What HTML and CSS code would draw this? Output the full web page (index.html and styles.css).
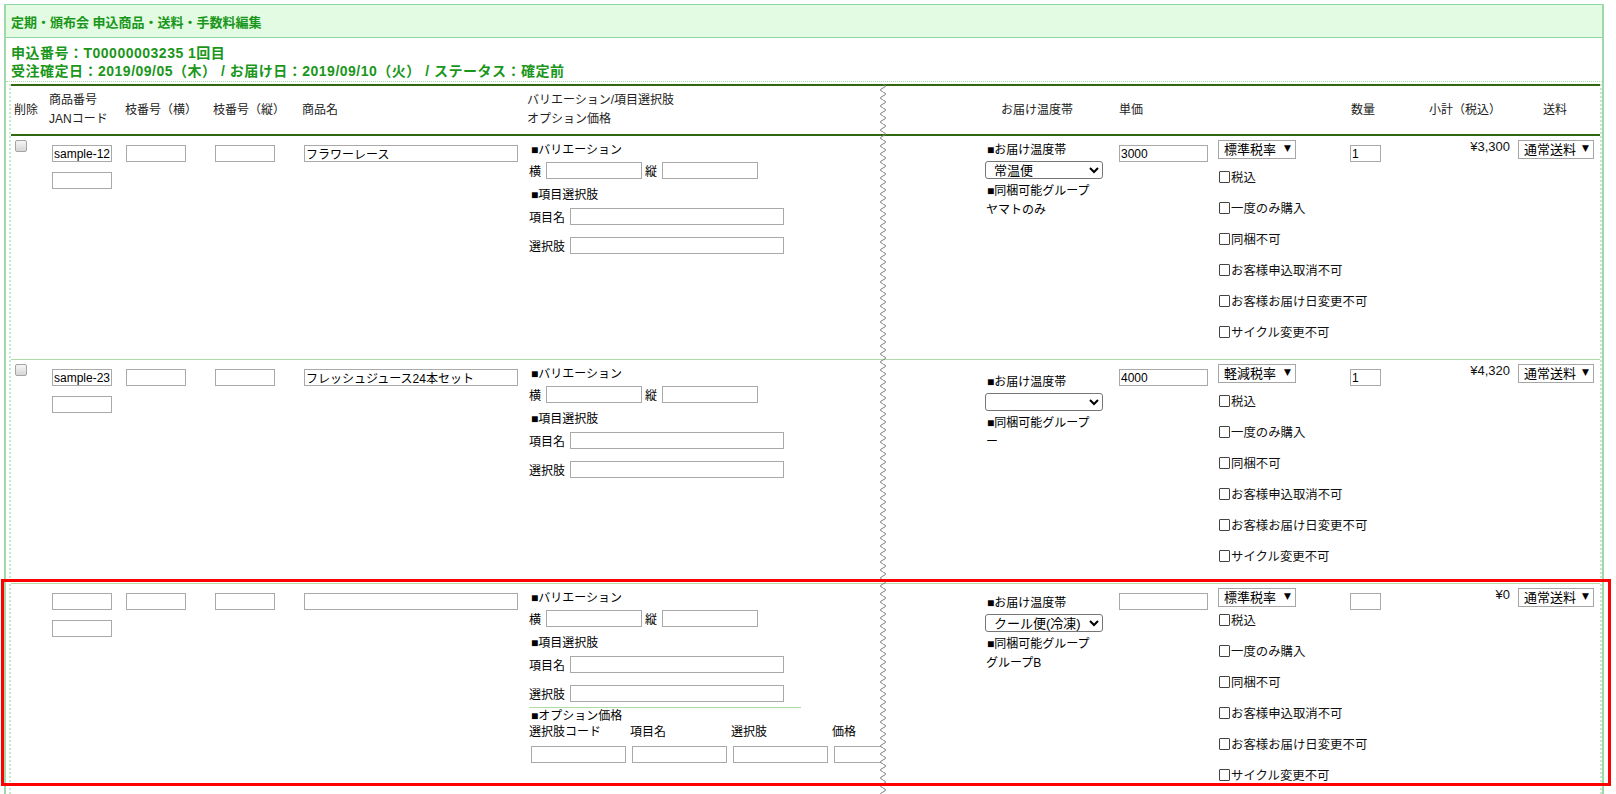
FILE: index.html
```html
<!DOCTYPE html>
<html lang="ja">
<head>
<meta charset="utf-8">
<title>定期・頒布会 申込商品・送料・手数料編集</title>
<link rel="stylesheet" href="styles.css">
</head>
<body>
<div class="wrap">
  <div class="title">定期・頒布会 申込商品・送料・手数料編集</div>
  <div class="info">
    <div>申込番号：T00000003235 1回目</div>
    <div>受注確定日：2019/09/05（木） / お届け日：2019/09/10（火） / ステータス：確定前</div>
  </div>
  <div class="tbl">
    <div class="grid thead">
      <div class="h h-del">削除</div>
      <div class="h h-code">商品番号<br>JANコード</div>
      <div class="h h-eda">枝番号（横）</div>
      <div class="h h-eda">枝番号（縦）</div>
      <div class="h h-name">商品名</div>
      <div class="h h-var">バリエーション/項目選択肢<br>オプション価格</div>
      <div class="h"></div>
      <div class="h h-temp">お届け温度帯</div>
      <div class="h h-price">単価</div>
      <div class="h"></div>
      <div class="h h-qty">数量</div>
      <div class="h h-sub">小計（税込）</div>
      <div class="h h-ship">送料</div>
    </div>

    <!-- row 1 -->
    <div class="grid row">
      <div class="c c-del"><input type="checkbox" class="delchk"></div>
      <div class="c c-code"><input class="ti w60" value="sample-123"><input class="ti w60 jan"></div>
      <div class="c c-eda1"><input class="ti w60"></div>
      <div class="c c-eda2"><input class="ti w60"></div>
      <div class="c c-name"><input class="ti w214" value="フラワーレース"></div>
      <div class="c c-var">
        <div class="vl vh">■バリエーション</div>
        <div class="vl vxy"><span>横</span><input class="ti w96"><span class="lt">縦</span><input class="ti w96"></div>
        <div class="vl vh2">■項目選択肢</div>
        <div class="vl vi"><span>項目名</span><input class="ti w214"></div>
        <div class="vl vi vi2"><span>選択肢</span><input class="ti w214"></div>
      </div>
      <div class="c c-gap"></div>
      <div class="c c-temp">
        <div class="tl">■お届け温度帯</div>
        <select class="tsel"><option>常温便</option></select>
        <div class="tl tl2">■同梱可能グループ</div>
        <div class="tv">ヤマトのみ</div>
      </div>
      <div class="c c-price"><input class="ti w89" value="3000"></div>
      <div class="c c-tax">
        <span class="ws"><select class="wsel w78"><option>標準税率</option></select></span>
        <div class="chks">
          <label class="ck"><input type="checkbox">税込</label>
          <label class="ck"><input type="checkbox">一度のみ購入</label>
          <label class="ck"><input type="checkbox">同梱不可</label>
          <label class="ck"><input type="checkbox">お客様申込取消不可</label>
          <label class="ck"><input type="checkbox">お客様お届け日変更不可</label>
          <label class="ck"><input type="checkbox">サイクル変更不可</label>
        </div>
      </div>
      <div class="c c-qty"><input class="ti w31" value="1"></div>
      <div class="c c-sub">¥3,300</div>
      <div class="c c-ship"><span class="ws"><select class="wsel w76"><option>通常送料</option></select></span></div>
    </div>

    <!-- row 2 -->
    <div class="grid row">
      <div class="c c-del"><input type="checkbox" class="delchk"></div>
      <div class="c c-code"><input class="ti w60" value="sample-234"><input class="ti w60 jan"></div>
      <div class="c c-eda1"><input class="ti w60"></div>
      <div class="c c-eda2"><input class="ti w60"></div>
      <div class="c c-name"><input class="ti w214" value="フレッシュジュース24本セット"></div>
      <div class="c c-var">
        <div class="vl vh">■バリエーション</div>
        <div class="vl vxy"><span>横</span><input class="ti w96"><span class="lt">縦</span><input class="ti w96"></div>
        <div class="vl vh2">■項目選択肢</div>
        <div class="vl vi"><span>項目名</span><input class="ti w214"></div>
        <div class="vl vi vi2"><span>選択肢</span><input class="ti w214"></div>
      </div>
      <div class="c c-gap"></div>
      <div class="c c-temp temp-low">
        <div class="tl">■お届け温度帯</div>
        <select class="tsel"><option></option></select>
        <div class="tl tl2">■同梱可能グループ</div>
        <div class="tv">ー</div>
      </div>
      <div class="c c-price"><input class="ti w89" value="4000"></div>
      <div class="c c-tax">
        <span class="ws"><select class="wsel w78"><option>軽減税率</option></select></span>
        <div class="chks">
          <label class="ck"><input type="checkbox">税込</label>
          <label class="ck"><input type="checkbox">一度のみ購入</label>
          <label class="ck"><input type="checkbox">同梱不可</label>
          <label class="ck"><input type="checkbox">お客様申込取消不可</label>
          <label class="ck"><input type="checkbox">お客様お届け日変更不可</label>
          <label class="ck"><input type="checkbox">サイクル変更不可</label>
        </div>
      </div>
      <div class="c c-qty"><input class="ti w31" value="1"></div>
      <div class="c c-sub">¥4,320</div>
      <div class="c c-ship"><span class="ws"><select class="wsel w76"><option>通常送料</option></select></span></div>
    </div>

    <!-- row 3 (new) -->
    <div class="grid row row-new">
      <div class="c c-del"></div>
      <div class="c c-code"><input class="ti w60"><input class="ti w60 jan"></div>
      <div class="c c-eda1"><input class="ti w60"></div>
      <div class="c c-eda2"><input class="ti w60"></div>
      <div class="c c-name"><input class="ti w214"></div>
      <div class="c c-var">
        <div class="vl vh">■バリエーション</div>
        <div class="vl vxy"><span>横</span><input class="ti w96"><span class="lt">縦</span><input class="ti w96"></div>
        <div class="vl vh2">■項目選択肢</div>
        <div class="vl vi"><span>項目名</span><input class="ti w214"></div>
        <div class="vl vi vi2"><span>選択肢</span><input class="ti w214"></div>
        <div class="opt">
          <div class="opt-h">■オプション価格</div>
          <div class="opt-grid">
            <span>選択肢コード</span><span>項目名</span><span>選択肢</span><span>価格</span>
            <input class="ti w95"><input class="ti w95"><input class="ti w95"><input class="ti w95">
          </div>
        </div>
      </div>
      <div class="c c-gap"></div>
      <div class="c c-temp temp-mid">
        <div class="tl">■お届け温度帯</div>
        <select class="tsel"><option>クール便(冷凍)</option></select>
        <div class="tl tl2">■同梱可能グループ</div>
        <div class="tv">グループB</div>
      </div>
      <div class="c c-price"><input class="ti w89"></div>
      <div class="c c-tax">
        <span class="ws"><select class="wsel w78"><option>標準税率</option></select></span>
        <div class="chks chks-up">
          <label class="ck"><input type="checkbox">税込</label>
          <label class="ck"><input type="checkbox">一度のみ購入</label>
          <label class="ck"><input type="checkbox">同梱不可</label>
          <label class="ck"><input type="checkbox">お客様申込取消不可</label>
          <label class="ck"><input type="checkbox">お客様お届け日変更不可</label>
          <label class="ck"><input type="checkbox">サイクル変更不可</label>
        </div>
      </div>
      <div class="c c-qty"><input class="ti w31"></div>
      <div class="c c-sub">¥0</div>
      <div class="c c-ship"><span class="ws"><select class="wsel w76"><option>通常送料</option></select></span></div>
    </div>
  </div>
</div>

<svg class="zig" width="10" height="712" aria-hidden="true">
  <defs>
    <pattern id="zz" width="10" height="8" patternUnits="userSpaceOnUse">
      <path d="M5 0 Q10 2 5 4 Q0 6 5 8" fill="none" stroke="#7d7d7d" stroke-width="1"/>
    </pattern>
  </defs>
  <rect width="10" height="712" fill="url(#zz)"/>
</svg>
<div class="redbox"></div>
</body>
</html>
```

FILE: styles.css
```css
html, body {
  margin: 0;
  padding: 0;
  height: 794px;
  overflow: hidden;
  background: #fff;
}
body {
  position: relative;
  padding-top: 4px;
  box-sizing: border-box;
  font-family: "Liberation Sans", "Noto Sans CJK JP", sans-serif;
  font-size: 12px;
  color: #000;
}

.wrap {
  margin-left: 4px;
  width: 1600px;
  height: 790px;
  box-sizing: border-box;
  border-left: 2px solid #9fd9ab;
  border-right: 2px solid #9fd9ab;
}

.title {
  height: 32px;
  border-top: 1px solid #8fd4a4;
  border-bottom: 1px solid #8fd4a4;
  background: #e2fbe2;
  color: #1a961a;
  font-weight: bold;
  font-size: 13px;
  display: flex;
  align-items: center;
  padding-left: 5px;
}

.info {
  padding: 6px 0 1px 5px;
  border-bottom: 1px dotted #a8dcb0;
  color: #1a961a;
  font-weight: bold;
  font-size: 14px;
  letter-spacing: 0.5px;
  line-height: 18px;
}

.tbl {
  margin: 2px 0 0 3px;
  width: 1593px;
  box-sizing: border-box;
  border-left: 2px dotted #c8e9c8;
  border-right: 2px dotted #c8e9c8;
}

.grid {
  display: grid;
  grid-template-columns: 36px 74px 88px 89px 227px 356px 102px 132px 99px 132px 42px 126px 86px;
}

.thead {
  height: 48px;
  border-top: 2px solid #306a10;
  border-bottom: 2px solid #306a10;
  align-items: center;
  color: #222;
  line-height: 19px;
}
.h-del { padding-left: 3px; }
.h-code { padding-left: 2px; }
.h-eda { padding-left: 4px; }
.h-name { padding-left: 4px; }
.h-var { padding-left: 2px; }
.h-temp { padding-left: 18px; }
.h-price { padding-left: 4px; }
.h-qty { padding-left: 5px; }
.h-sub { padding-left: 41px; }
.h-ship { padding-left: 29px; }

.row {
  border-bottom: 1px solid #aedba6;
  align-items: start;
}
.row-new { border-bottom: 0; }

.c { min-width: 0; }

/* inputs */
.ti {
  display: block;
  box-sizing: border-box;
  height: 17px;
  margin: 0;
  padding: 0 1px;
  border: 1px solid #a9a9a9;
  border-radius: 0;
  background: #fff;
  font: 12px "Liberation Sans", "Noto Sans CJK JP", sans-serif;
  color: #000;
  outline: none;
}
.w60 { width: 60px; }
.w96 { width: 96px; }
.w214 { width: 214px; }
.w89 { width: 89px; }
.w31 { width: 31px; }
.w95 { width: 95px; }

.c-del { padding: 4px 0 0 4px; }
.delchk {
  appearance: none;
  display: block;
  margin: 0;
  width: 12px;
  height: 12px;
  box-sizing: border-box;
  border: 1px solid #a4a4a4;
  border-radius: 2px;
  background: linear-gradient(#f6f6f6, #d6d6d6);
}

.c-code { padding: 9px 0 0 5px; }
.c-code .jan { margin-top: 10px; }
.c-eda1 { padding: 9px 0 0 5px; }
.c-eda2 { padding: 9px 0 0 6px; }
.c-name { padding: 9px 0 0 6px; }

/* variation */
.c-var {
  padding: 2px 0 0 4px;
  overflow: hidden;
}
.vl {
  display: flex;
  align-items: center;
  white-space: nowrap;
}
.vl .ti { display: inline-block; flex-shrink: 0; }
.vh { height: 20px; padding-left: 2px; }
.vxy { height: 24px; }
.vxy span { margin-right: 5px; }
.vxy .lt { margin-left: 3px; }
.vh2 { height: 22px; padding-left: 2px; }
.vi { height: 24px; }
.vi span { margin-right: 5px; }
.vi2 { margin-top: 5px; }

.opt {
  margin-top: 2px;
  width: 272px;
  border-top: 1px solid #aedba6;
}
.opt-h { height: 16px; line-height: 16px; padding-left: 2px; }
.opt-grid {
  display: grid;
  grid-template-columns: 101px 101px 101px 101px;
  width: 404px;
  line-height: 16px;
}
.opt-grid span { height: 16px; white-space: nowrap; }
.opt-grid .ti { margin: 6px 0 0 2px; }

/* temperature */
.c-temp { padding: 4px 0 0 3px; white-space: nowrap; }
.temp-low { padding-top: 12px; }
.temp-mid { padding-top: 9px; }
.tl { height: 20px; line-height: 20px; padding-left: 1px; }
.tl2 { margin-top: 2px; }
.tv { height: 18px; line-height: 18px; }
.tsel {
  display: block;
  width: 118px;
  height: 18px;
  margin: 1px 0 0 -1px;
  padding: 0 0 0 4px;
  font: 13px "Liberation Sans", "Noto Sans CJK JP", sans-serif;
  color: #000;
  border: 1px solid #767676;
  border-radius: 3px;
  background: #fff;
}

.c-price { padding: 9px 0 0 4px; }

/* tax */
.c-tax { padding: 4px 0 12px 4px; white-space: nowrap; }
.ws {
  position: relative;
  display: inline-block;
  vertical-align: top;
}
.ws::after {
  content: "▼";
  position: absolute;
  right: 5px;
  top: 3px;
  font-family: "DejaVu Sans", sans-serif;
  font-size: 9px;
  line-height: 10px;
  color: #000;
  pointer-events: none;
}
.wsel {
  appearance: none;
  display: block;
  box-sizing: border-box;
  height: 19px;
  margin: 0;
  padding: 0 0 0 5px;
  border: 1px solid #a6a6a6;
  border-radius: 0;
  background: #fff;
  font: 13px "Liberation Sans", "Noto Sans CJK JP", sans-serif;
  color: #000;
}
.w78 { width: 78px; }
.w76 { width: 76px; }

.chks { margin-top: 2px; }
.chks-up { margin-top: -3px; }
.ck {
  display: flex;
  align-items: center;
  height: 31px;
  font-size: 12.4px;
  white-space: nowrap;
  color: #111;
}
.ck input {
  appearance: none;
  flex-shrink: 0;
  margin: 0 1px 0 1px;
  width: 11px;
  height: 12px;
  box-sizing: border-box;
  border: 1px solid #444;
  border-radius: 1px;
  background: #fff;
}

.c-qty { padding: 9px 0 0 4px; }
.c-sub {
  padding: 3px 4px 0 0;
  text-align: right;
  font-size: 13px;
  line-height: 16px;
  color: #111;
}
.c-ship { padding: 4px 0 0 4px; }

/* overlays: torn-screenshot seam and red highlight */
.zig {
  position: absolute;
  left: 878px;
  top: 84px;
}
.redbox {
  position: absolute;
  left: 1px;
  top: 579px;
  width: 1610px;
  height: 207px;
  box-sizing: border-box;
  border: 3px solid #f00;
  pointer-events: none;
}
```
